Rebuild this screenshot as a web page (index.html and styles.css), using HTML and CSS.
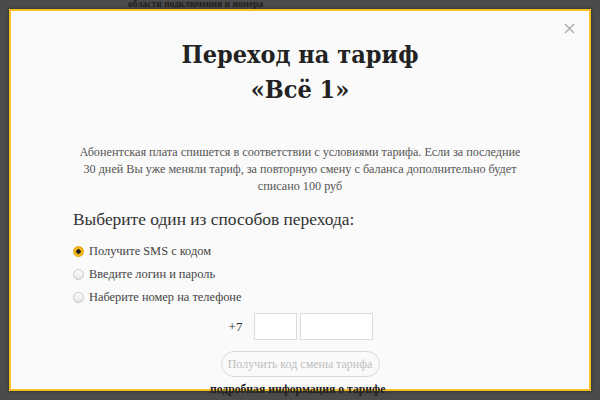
FILE: index.html
```html
<!DOCTYPE html>
<html lang="ru">
<head>
    <meta charset="UTF-8">
    <meta name="viewport" content="width=device-width, initial-scale=1.0">
    <title>Переход на тариф</title>
    <link rel="stylesheet" href="styles.css">
</head>
<body>
    <div class="page">
        <p class="page-text top-text">области подключения и номера</p>
        <p class="page-text bottom-text">подробная информация о тарифе</p>
    </div>

    <div class="modal">
        <button class="close" aria-label="Закрыть">
            <svg width="11" height="11" viewBox="0 0 11 11">
                <path d="M1 1 L10 10 M10 1 L1 10" stroke="#a8a8a8" stroke-width="1.2" fill="none"/>
            </svg>
        </button>

        <h1 class="title">Переход на тариф<br>«Всё 1»</h1>

        <p class="note">
            Абонентская плата спишется в соответствии с условиями тарифа. Если за последние<br>
            30 дней Вы уже меняли тариф, за повторную смену с баланса дополнительно будет<br>
            списано 100 руб
        </p>

        <div class="methods">
            <h2 class="methods-title">Выберите один из способов перехода:</h2>
            <label class="radio-row">
                <span class="radio checked"></span>
                Получите SMS с кодом
            </label>
            <label class="radio-row">
                <span class="radio"></span>
                Введите логин и пароль
            </label>
            <label class="radio-row">
                <span class="radio"></span>
                Наберите номер на телефоне
            </label>
        </div>

        <div class="phone">
            <span class="prefix">+7</span>
            <input type="text" class="phone-box code">
            <input type="text" class="phone-box number">
        </div>

        <div class="actions">
            <button class="get-code" disabled>Получить код смены тарифа</button>
        </div>
    </div>
</body>
</html>
```

FILE: styles.css
```css
body {
    margin: 0;
    background-color: #4b4b4b;
    font-family: "Liberation Serif", "DejaVu Serif", serif;
    width: 600px;
    height: 400px;
    overflow: hidden;
}
.page {
    position: relative;
    height: 400px;
}
.page-text {
    margin: 0;
    font-weight: bold;
    color: #1e1e1e;
}
.top-text {
    padding: 0 0 0 128px;
    font-size: 9.5px;
    line-height: 12px;
    margin-top: -2px;
}
.bottom-text {
    position: absolute;
    left: 210px;
    top: 385px;
    z-index: 5;
    font-size: 11.7px;
    line-height: 14px;
}
.modal {
    position: absolute;
    left: 9px;
    top: 9px;
    width: 578px;
    height: 378px;
    border: 2px solid #f4c022;
    background-color: #fafafa;
    box-shadow: 0 0 4px rgba(0, 0, 0, 0.4);
    display: flex;
    flex-direction: column;
    align-items: center;
}
.close {
    position: absolute;
    right: 14px;
    top: 11px;
    background: none;
    border: none;
    padding: 0;
    cursor: pointer;
}
.title {
    margin: 26px 0 0;
    font-family: "DejaVu Serif Condensed", "DejaVu Serif", serif;
    font-stretch: condensed;
    font-weight: bold;
    font-size: 25px;
    line-height: 35px;
    text-align: center;
    color: #222;
}
.note {
    margin: 37px 0 0;
    font-size: 12.2px;
    line-height: 17px;
    color: #555;
    text-align: center;
}
.methods {
    align-self: stretch;
    padding-left: 62px;
    margin-top: 12px;
}
.methods-title {
    margin: 0 0 9px;
    font-weight: normal;
    font-size: 17.4px;
    line-height: 24px;
    color: #333;
}
.radio-row {
    display: flex;
    align-items: center;
    gap: 5px;
    height: 23px;
    font-size: 12.4px;
    color: #444;
}
.radio {
    width: 9px;
    height: 9px;
    border-radius: 50%;
    border: 1px solid #c8c8c8;
    background: linear-gradient(#fff, #e4e4e4);
}
.radio.checked {
    border-color: #e0a400;
    background: radial-gradient(circle, #222 0 2px, #f5b41c 2.5px);
}
.phone {
    display: flex;
    align-items: center;
    margin-top: 4px;
    margin-left: 5px;
}
.prefix {
    font-size: 13px;
    color: #333;
    margin-right: 12px;
}
.phone-box {
    height: 25px;
    border: 1px solid #dcdcdc;
    background: #fff;
    padding: 0;
    margin-right: 3px;
}
.code {
    width: 41px;
}
.number {
    width: 71px;
}
.actions {
    margin-top: 11px;
}
.get-code {
    width: 159px;
    height: 26px;
    border: 1px solid #dadada;
    border-radius: 13px;
    background: #fafafa;
    font-family: "Liberation Serif", serif;
    font-size: 12px;
    color: #bdbdbd;
}
```
